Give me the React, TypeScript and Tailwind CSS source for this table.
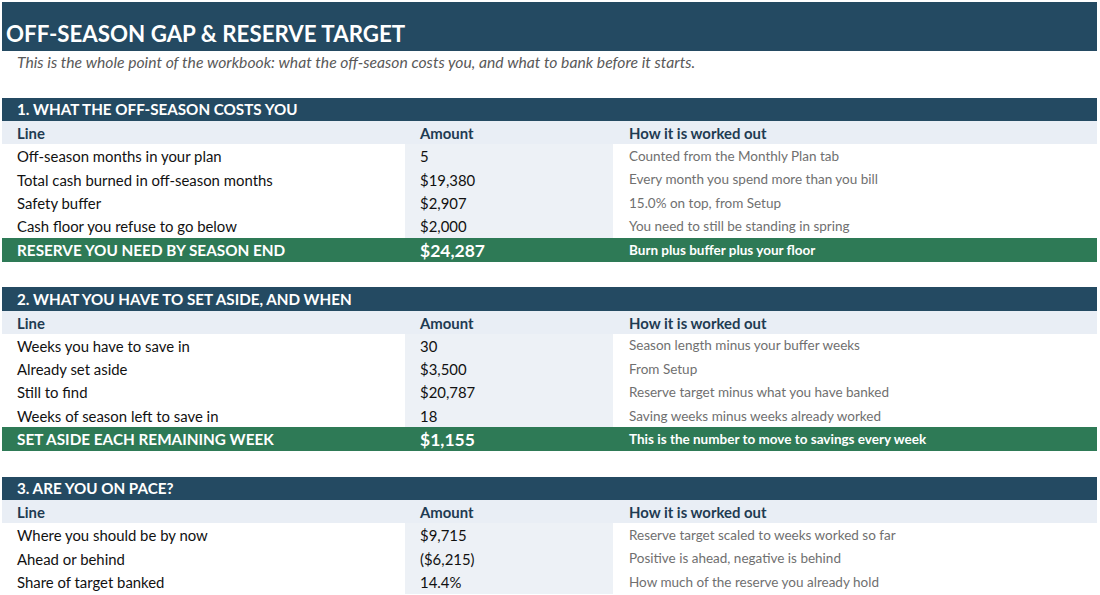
import React from "react";

type Row = { line: string; amount: string; how: string };
type Section = {
  title: string;
  rows: Row[];
  total?: { line: string; amount: string; how: string };
};

const sections: Section[] = [
  {
    title: "1. WHAT THE OFF-SEASON COSTS YOU",
    rows: [
      { line: "Off-season months in your plan", amount: "5", how: "Counted from the Monthly Plan tab" },
      { line: "Total cash burned in off-season months", amount: "$19,380", how: "Every month you spend more than you bill" },
      { line: "Safety buffer", amount: "$2,907", how: "15.0% on top, from Setup" },
      { line: "Cash floor you refuse to go below", amount: "$2,000", how: "You need to still be standing in spring" },
    ],
    total: { line: "RESERVE YOU NEED BY SEASON END", amount: "$24,287", how: "Burn plus buffer plus your floor" },
  },
  {
    title: "2. WHAT YOU HAVE TO SET ASIDE, AND WHEN",
    rows: [
      { line: "Weeks you have to save in", amount: "30", how: "Season length minus your buffer weeks" },
      { line: "Already set aside", amount: "$3,500", how: "From Setup" },
      { line: "Still to find", amount: "$20,787", how: "Reserve target minus what you have banked" },
      { line: "Weeks of season left to save in", amount: "18", how: "Saving weeks minus weeks already worked" },
    ],
    total: { line: "SET ASIDE EACH REMAINING WEEK", amount: "$1,155", how: "This is the number to move to savings every week" },
  },
  {
    title: "3. ARE YOU ON PACE?",
    rows: [
      { line: "Where you should be by now", amount: "$9,715", how: "Reserve target scaled to weeks worked so far" },
      { line: "Ahead or behind", amount: "($6,215)", how: "Positive is ahead, negative is behind" },
      { line: "Share of target banked", amount: "14.4%", how: "How much of the reserve you already hold" },
    ],
  },
];

function SectionBlock({ s }: { s: Section }) {
  return (
    <div className="flex flex-col">
      <div className="h-[23.4px] bg-[#244a62] flex items-center pl-[15px] pt-[1px] text-white font-bold text-[15.2px] leading-none">
        {s.title}
      </div>
      <div className="h-[23.4px] bg-[#e9eef5] grid grid-cols-[403px_208px_1fr] items-center pt-[2px] text-[#1f3b52] font-bold text-[14.9px] leading-none">
        <div className="pl-[15px]">Line</div>
        <div className="pl-[15px]">Amount</div>
        <div className="pl-[16px]">How it is worked out</div>
      </div>
      {s.rows.map((r) => (
        <div key={r.line} className="h-[23.4px] grid grid-cols-[403px_208px_1fr] text-[14.9px] leading-none">
          <div className="pl-[15px] pt-[1px] flex items-center bg-white text-[#111]">{r.line}</div>
          <div className="pl-[15px] pt-[1px] flex items-center bg-[#edf1f6] text-[#111]">{r.amount}</div>
          <div className="pl-[16px] pt-[1px] flex items-center bg-white text-[#707070] text-[13.5px]">{r.how}</div>
        </div>
      ))}
      {s.total && (
        <div className="h-[24px] bg-[#2e7a56] grid grid-cols-[403px_208px_1fr] items-center pt-[1px] text-white font-bold leading-none">
          <div className="pl-[15px] text-[15.3px]">{s.total.line}</div>
          <div className="pl-[15px] text-[17.5px]">{s.total.amount}</div>
          <div className="pl-[16px] text-[13.5px]">{s.total.how}</div>
        </div>
      )}
    </div>
  );
}

export default function App() {
  return (
    <div
      className="w-[1100px] h-[595px] bg-white overflow-hidden pl-[2px] pr-[3px] pt-[2px]"
      style={{ fontFamily: "Lato, 'Open Sans', sans-serif" }}
    >
      <div className="h-[49px] bg-[#244a62] flex items-end pb-[6px] pl-[4px] text-white font-bold text-[22.3px] leading-none">
        OFF-SEASON GAP &amp; RESERVE TARGET
      </div>
      <div className="h-[24px] flex items-center pl-[15px] italic text-[#595959] text-[15.7px]">
        This is the whole point of the workbook: what the off-season costs you, and what to bank before it starts.
      </div>
      <div className="h-[22.6px]" />
      <div className="flex flex-col gap-[25.2px]">
        {sections.map((s) => (
          <SectionBlock key={s.title} s={s} />
        ))}
      </div>
    </div>
  );
}
